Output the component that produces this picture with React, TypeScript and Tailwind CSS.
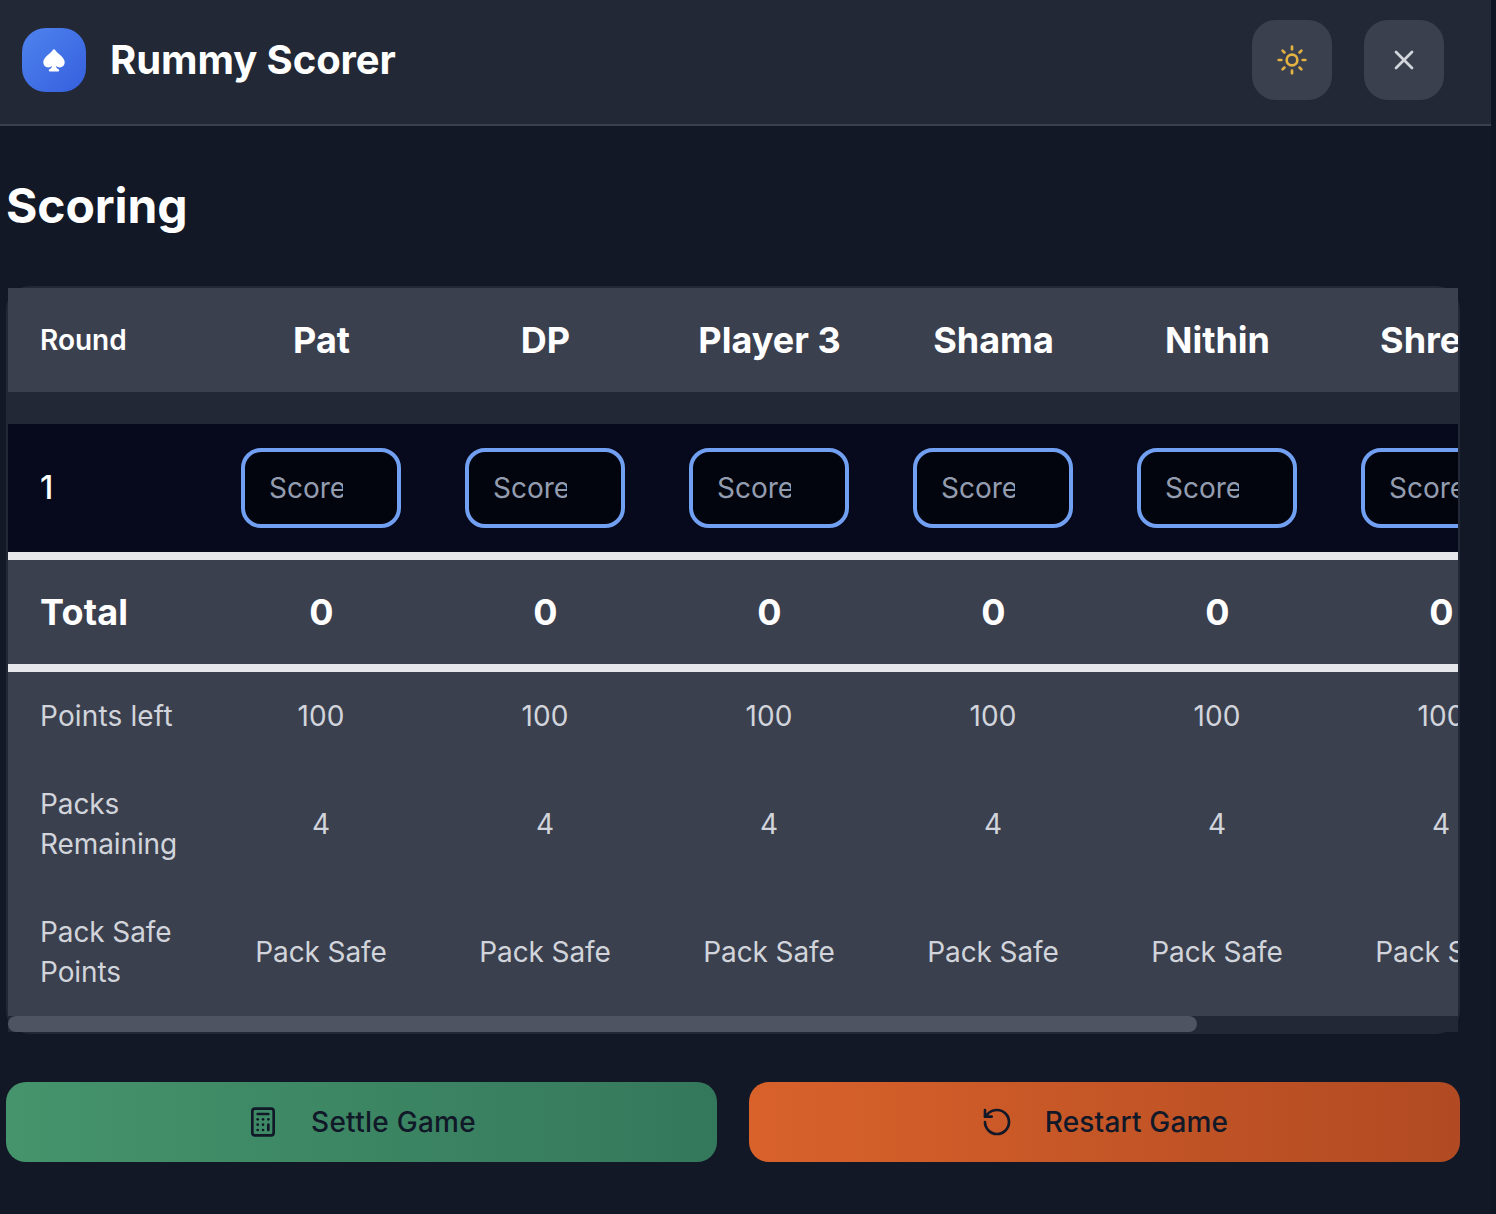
import React from "react";
import { Calculator, RotateCcw, Sun, X } from "lucide-react";

const players = ["Pat", "DP", "Player 3", "Shama", "Nithin", "Shreya"];

function Spade() {
  return (
    <svg width="22" height="23" viewBox="0 0 22 23" fill="currentColor" aria-hidden="true">
      <path d="M11 0.2C11.9 0.2 12.1 1 12.9 2C15.6 5.5 21.7 8.3 21.7 13.3C21.7 16.3 19.5 18.4 16.8 18.4C15.2 18.4 13.9 17.7 12.9 16.8C13.1 18.4 13.9 19.3 15.2 20.1C16.9 21.2 16.3 22.6 15 22.6H7C5.7 22.6 5.1 21.2 6.8 20.1C8.1 19.3 8.9 18.4 9.1 16.8C8.1 17.7 6.8 18.4 5.2 18.4C2.5 18.4 0.3 16.3 0.3 13.3C0.3 8.3 6.4 5.5 9.1 2C9.9 1 10.1 0.2 11 0.2Z" />
    </svg>
  );
}

function Header() {
  return (
    <header className="flex h-[126px] w-[1491px] items-center justify-between border-b-2 border-[#374151] bg-[#222835] pr-[47px] pb-1 pl-[22px]">
      <div className="flex items-center gap-6">
        <div className="flex size-16 items-center justify-center rounded-3xl bg-gradient-to-br from-[#4f83ee] to-[#365fde] text-white">
          <Spade />
        </div>
        <h1 className="text-[40px] leading-[56px] font-bold tracking-[-0.08px]">Rummy Scorer</h1>
      </div>
      <div className="flex gap-8">
        <button className="flex size-20 items-center justify-center rounded-3xl bg-[#3b404f] text-[#e3b341]">
          <Sun size={32} />
        </button>
        <button className="flex size-20 items-center justify-center rounded-3xl bg-[#3b404f] text-[#d3d6db]">
          <X size={32} />
        </button>
      </div>
    </header>
  );
}

function Row({ label, value, className, labelClass = "", valueClass = "" }: { label: string; value: string; className: string; labelClass?: string; valueClass?: string }) {
  return (
    <div className={"flex items-center bg-[#3b404f] " + className}>
      <div className={"w-[201px] shrink-0 pl-8 " + labelClass}>{label}</div>
      {players.map((p) => (
        <div key={p} className={"w-56 shrink-0 text-center " + valueClass}>{value}</div>
      ))}
    </div>
  );
}

function ScoreTable() {
  return (
    <section className="h-[748px] w-[1454px] rounded-3xl border-2 border-[#222835] bg-[#222835]">
      <div className="h-[744px] overflow-hidden bg-[#222835]">
        <div className="w-[1545px]">
          <div className="flex h-[104px] items-center bg-[#3b404f]">
            <div className="w-[201px] shrink-0 pl-8 text-[28px] font-semibold">Round</div>
            {players.map((p) => (
              <div key={p} className="w-56 shrink-0 pl-px text-center text-4xl font-bold">{p}</div>
            ))}
          </div>
          <div className="h-8" />
          <div className="flex h-32 items-center bg-[#060a1c]">
            <div className="w-[201px] shrink-0 pl-8 text-[32px] font-medium">1</div>
            {players.map((p) => (
              <div key={p} className="flex w-56 shrink-0 justify-center">
                <input
                  placeholder="Score"
                  aria-label={p}
                  className="h-20 w-40 rounded-[20px] border-4 border-[#719ff2] bg-[#02050e] pr-[54px] pl-[24px] text-[28px] placeholder:text-[#949db0]"
                />
              </div>
            ))}
          </div>
          <Row label="Total" value="0" className="h-[120px] border-y-8 border-[#e5e7eb] text-4xl font-bold" labelClass="tracking-[0.2px]" valueClass="pl-px" />
          <Row label="Points left" value="100" className="h-[88px] text-[28px] tracking-[0.15px] text-[#d1d5db]" />
          <Row label="Packs Remaining" value="4" className="h-32 text-[28px] leading-10 text-[#d1d5db]" labelClass="pr-4 tracking-[-0.1px]" />
          <Row label="Pack Safe Points" value="Pack Safe" className="h-32 text-[28px] leading-10 text-[#d1d5db]" labelClass="pr-4 tracking-[-0.1px]" valueClass="tracking-[-0.1px]" />
        </div>
        <div className="h-4 w-[1189px] rounded-full bg-[#4f5462]" />
      </div>
    </section>
  );
}

export default function App() {
  return (
    <div className="h-[1214px] w-[1496px] overflow-hidden bg-[#0f1523] font-['Inter',sans-serif] text-white">
      <div className="h-full w-[1491px] bg-[#121826]">
        <Header />
        <main className="w-[1460px] pl-1.5">
          <h2 className="pt-[48px] text-5xl leading-[64px] font-bold tracking-[-0.1px]">Scoring</h2>
          <div className="pt-12">
            <ScoreTable />
          </div>
          <div className="mt-12 grid grid-cols-2 gap-8 text-[28px] font-medium text-[#111827]">
            <button className="flex h-20 items-center justify-center gap-8 rounded-[20px] bg-gradient-to-r from-[#45946c] to-[#34785b] tracking-[0.27px]">
              <Calculator size={32} />
              Settle Game
            </button>
            <button className="flex h-20 items-center justify-center gap-8 rounded-[20px] bg-gradient-to-r from-[#d9622b] to-[#b14a22] tracking-[0.18px]">
              <RotateCcw size={32} />
              Restart Game
            </button>
          </div>
        </main>
      </div>
    </div>
  );
}
